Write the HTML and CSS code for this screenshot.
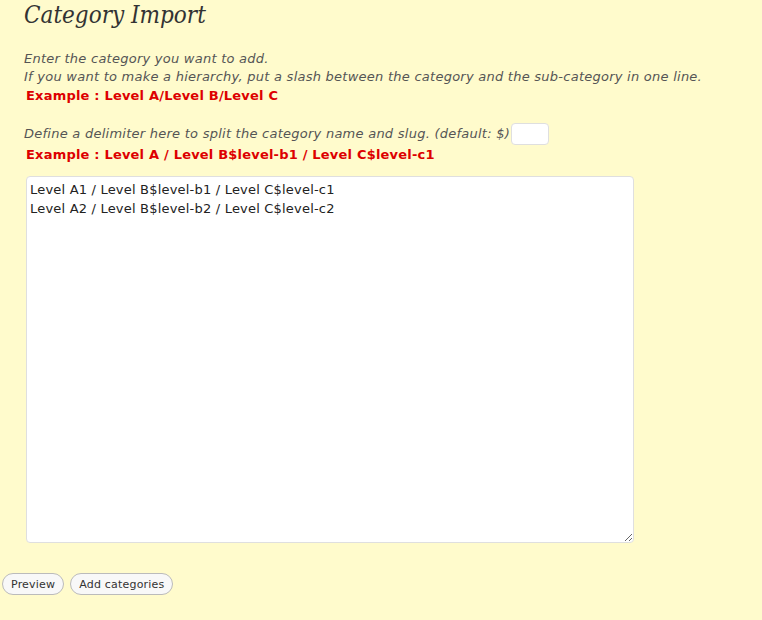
FILE: index.html
```html
<!DOCTYPE html>
<html>
<head>
<meta charset="utf-8">
<link rel="stylesheet" href="styles.css">
</head>
<body>
<div class="wrap">
  <h2 class="title">Category Import</h2>
  <p class="intro">Enter the category you want to add.<br>If you want to make a hierarchy, put a slash between the category and the sub-category in one line.</p>
  <p class="example">Example : Level A/Level B/Level C</p>
  <p class="intro delim">Define a delimiter here to split the category name and slug. (default: $)<input class="delim-input" type="text"></p>
  <p class="example">Example : Level A / Level B$level-b1 / Level C$level-c1</p>
  <textarea class="cats">Level A1 / Level B$level-b1 / Level C$level-c1
Level A2 / Level B$level-b2 / Level C$level-c2</textarea>
</div>
<div class="buttons">
  <button class="btn">Preview</button>
  <button class="btn">Add categories</button>
</div>
</body>
</html>
```

FILE: styles.css
```css
html, body {
  margin: 0;
  padding: 0;
  background: #fffbcc;
  height: 100%;
}
body {
  font-family: "DejaVu Sans", Verdana, sans-serif;
  color: #333;
}
.wrap {
  padding-left: 24px;
}
.title {
  margin: 0;
  padding-top: 1px;
  font-family: "DejaVu Serif Condensed", "DejaVu Serif", Georgia, serif;
  font-style: italic;
  font-weight: normal;
  font-size: 24px;
  line-height: 29px;
  color: #333;
}
.intro {
  margin: 20px 0 0 0;
  font-style: italic;
  font-size: 13px;
  letter-spacing: 0.25px;
  line-height: 18px;
  color: #555;
}
.delim {
  margin-top: 18px;
  display: flex;
  align-items: center;
}
.delim-input {
  width: 38px;
  height: 22px;
  box-sizing: border-box;
  margin: 0 0 0 1px;
  padding: 1px;
  border: 1px solid #dfdfdf;
  border-radius: 4px;
  background: #fff;
}
.example {
  margin: 0 0 0 2px;
  font-weight: bold;
  font-size: 13px;
  letter-spacing: 0.2px;
  line-height: 19px;
  color: #d00;
}
.cats {
  display: block;
  margin: 12px 0 0 2px;
  width: 608px;
  height: 367px;
  box-sizing: border-box;
  padding: 3px 3px;
  border: 1px solid #dfdfdf;
  border-radius: 4px;
  background: #fff;
  font-family: "DejaVu Sans", Verdana, sans-serif;
  font-size: 13px;
  letter-spacing: 0.2px;
  line-height: 19px;
  color: #222;
  resize: both;
}
.buttons {
  display: flex;
  gap: 6px;
  padding: 30px 0 0 2px;
}
.btn {
  font-family: "DejaVu Sans", Verdana, sans-serif;
  font-size: 11px;
  letter-spacing: 0.2px;
  color: #333;
  background: #f8f8f8;
  border: 1px solid #bbb;
  border-radius: 11px;
  height: 22px;
  padding: 0 8px;
}
```
